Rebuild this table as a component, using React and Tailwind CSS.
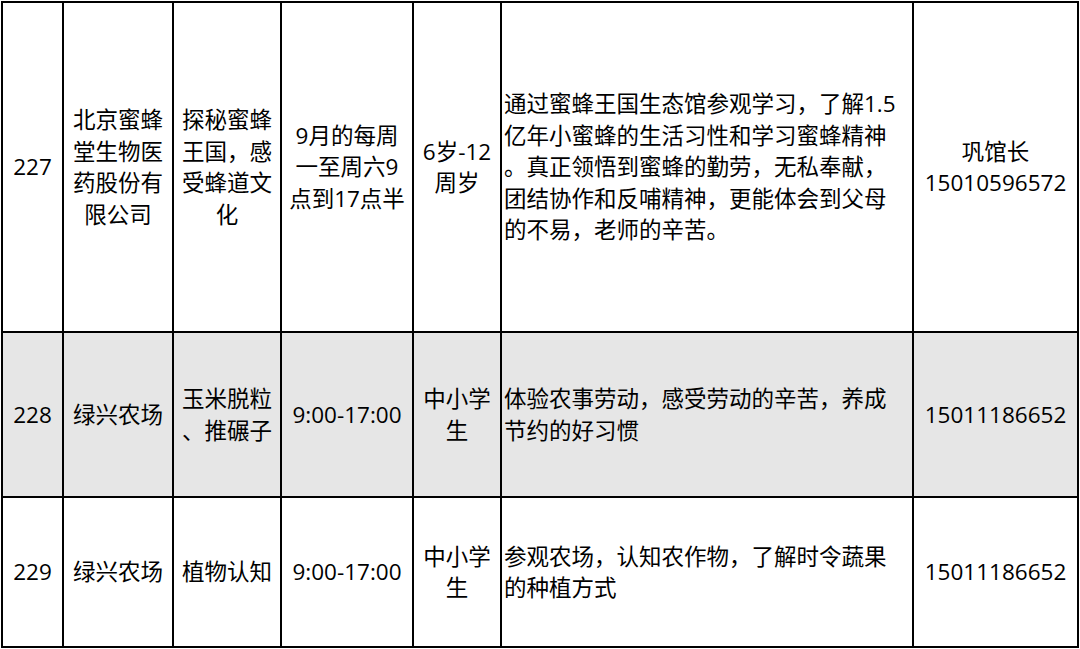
import React from 'react';

const rows = [
    {
        no: '227',
        org: ['北京蜜蜂', '堂生物医', '药股份有', '限公司'],
        name: ['探秘蜜蜂', '王国，感', '受蜂道文', '化'],
        time: ['9月的每周', '一至周六9', '点到17点半'],
        age: ['6岁-12', '周岁'],
        desc: [
            '通过蜜蜂王国生态馆参观学习，了解1.5',
            '亿年小蜜蜂的生活习性和学习蜜蜂精神',
            '。真正领悟到蜜蜂的勤劳，无私奉献，',
            '团结协作和反哺精神，更能体会到父母',
            '的不易，老师的辛苦。',
        ],
        contact: ['巩馆长', '15010596572'],
        height: 'h-[330px]',
        bg: 'bg-white',
    },
    {
        no: '228',
        org: ['绿兴农场'],
        name: ['玉米脱粒', '、推碾子'],
        time: ['9:00-17:00'],
        age: ['中小学', '生'],
        desc: ['体验农事劳动，感受劳动的辛苦，养成', '节约的好习惯'],
        contact: ['15011186652'],
        height: 'h-[165px]',
        bg: 'bg-[#e6e6e6]',
    },
    {
        no: '229',
        org: ['绿兴农场'],
        name: ['植物认知'],
        time: ['9:00-17:00'],
        age: ['中小学', '生'],
        desc: ['参观农场，认知农作物，了解时令蔬果', '的种植方式'],
        contact: ['15011186652'],
        height: 'h-[150px]',
        bg: 'bg-white',
    },
];

function Lines({ items }) {
    return items.map((line, i) => (
        <div key={i} className="whitespace-nowrap">{line}</div>
    ));
}

export default function App() {
    const cell = 'border-2 border-black align-middle p-0';

    return (
        <div className="w-[1080px] h-[649px] bg-white pt-px pl-px overflow-hidden">
            <table
                className="border-collapse table-fixed w-[1078px] text-black text-[22.5px] leading-[31.5px]"
                style={{ fontFamily: '"Open Sans", "Noto Sans CJK SC", sans-serif' }}
            >
                <colgroup>
                    <col className="w-[61px]" />
                    <col className="w-[110px]" />
                    <col className="w-[108px]" />
                    <col className="w-[132px]" />
                    <col className="w-[88px]" />
                    <col className="w-[412px]" />
                    <col className="w-[165px]" />
                </colgroup>
                <tbody>
                    {rows.map(row => (
                        <tr key={row.no} className={`${row.height} ${row.bg}`}>
                            <td className={`${cell} text-center`}>{row.no}</td>
                            <td className={`${cell} text-center`}><Lines items={row.org} /></td>
                            <td className={`${cell} text-center`}><Lines items={row.name} /></td>
                            <td className={`${cell} text-center`}><Lines items={row.time} /></td>
                            <td className={`${cell} text-center`}><Lines items={row.age} /></td>
                            {/* description is left aligned, hugging the border */}
                            <td className={`${cell} text-left pl-[2px]`}><Lines items={row.desc} /></td>
                            <td className={`${cell} text-center`}><Lines items={row.contact} /></td>
                        </tr>
                    ))}
                </tbody>
            </table>
        </div>
    );
}
